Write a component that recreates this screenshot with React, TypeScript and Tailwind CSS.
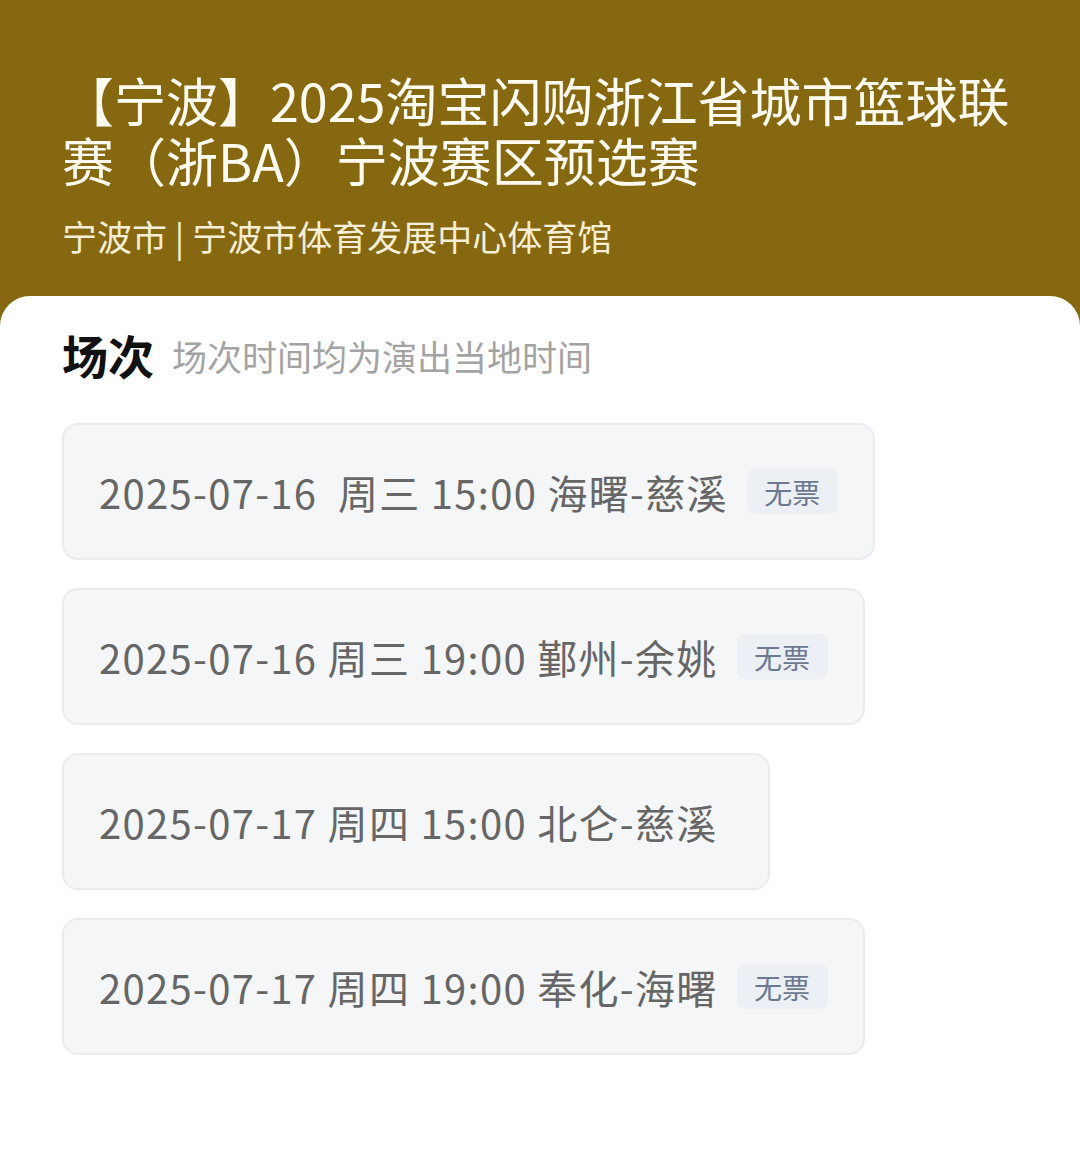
import React from 'react';

// 场次数据
interface Session {
  label: string;
  soldOut: boolean;
}

const SESSIONS: Session[] = [
  { label: '2025-07-16\u00a0\u00a0周三 15:00 海曙-慈溪', soldOut: true },
  { label: '2025-07-16 周三 19:00 鄞州-余姚', soldOut: true },
  { label: '2025-07-17 周四 15:00 北仑-慈溪', soldOut: false },
  { label: '2025-07-17 周四 19:00 奉化-海曙', soldOut: true },
];

const FONT = { fontFamily: '"Noto Sans CJK SC", "Noto Sans", sans-serif' };

const App: React.FC = () => {
  return (
    <div className="min-h-screen w-[1080px] bg-[#85680f]" style={FONT}>
      {/* 顶部标题区 */}
      <div className="px-[62px] pt-[70px] pb-[38px]">
        <h1 className="text-[52px] leading-[60px] font-normal text-[#fffbf0]">
          【宁波】2025淘宝闪购浙江省城市篮球联赛（浙BA）宁波赛区预选赛
        </h1>
        <p className="mt-[24px] text-[35px] leading-[44px] text-[#f6eed6]">
          宁波市 | 宁波市体育发展中心体育馆
        </p>
      </div>

      {/* 场次面板 */}
      <div className="bg-white rounded-t-[30px] min-h-[900px] px-[62px] pt-[36px] pb-[60px]">
        <div className="flex items-end gap-[18px]">
          <h2 className="text-[46px] leading-[44px] font-bold text-[#111]">场次</h2>
          <span className="text-[35px] leading-[40px] text-[#a3a3a3]">场次时间均为演出当地时间</span>
        </div>

        <div className="mt-[47px] flex flex-col items-start gap-[28px]">
          {SESSIONS.map((s, i) => (
            <div
              key={i}
              className={
                s.soldOut
                  ? 'h-[137px] flex items-center gap-[19px] pl-[35px] pr-[35px] rounded-[16px] bg-[#f5f6f8] border-2 border-[#eaebee]'
                  : 'h-[137px] flex items-center gap-[19px] pl-[35px] pr-[50px] rounded-[16px] bg-[#f5f6f8] border-2 border-[#eaebee]'
              }
            >
              <span className="text-[40px] leading-none tracking-[1.3px] text-[#666666] whitespace-nowrap">{s.label}</span>
              {s.soldOut && (
                <span className="w-[91px] h-[45px] flex items-center justify-center rounded-[8px] bg-[#eceff4] text-[28px] text-[#6b7890]">
                  无票
                </span>
              )}
            </div>
          ))}
        </div>
      </div>
    </div>
  );
};

export default App;
